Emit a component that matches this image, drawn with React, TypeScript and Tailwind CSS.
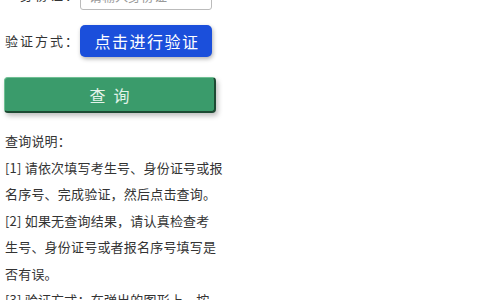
export default function App() {
  return (
    <div className="h-[300px] w-[480px] overflow-hidden bg-white font-['Noto_Sans_CJK_SC',sans-serif] text-[#333]">
      <div className="-mt-[20px] flex flex-col pl-[5px]">
        {/* id card row */}
        <div className="flex h-[30px] items-center">
          <span className="w-[75px] whitespace-nowrap text-right text-[13px] tracking-[2px]">身份证：</span>
          <input
            className="h-[30px] w-[132px] rounded-[3px] border border-[#bbb] px-2 text-[13px] placeholder-[#999] outline-none"
            placeholder="请输入身份证"
          />
        </div>

        {/* verify row */}
        <div className="mt-[15px] flex h-[32px] items-center">
          <span className="w-[75px] whitespace-nowrap text-right text-[13px] tracking-[2px]">验证方式：</span>
          <button
            type="button"
            className="h-[32px] w-[132px] rounded-[5px] bg-[#1b4fdb] pl-[2px] text-[16px] tracking-[1.5px] text-white shadow-[1px_2px_4px_rgba(0,0,0,0.3)]"
          >
            点击进行验证
          </button>
        </div>

        {/* submit */}
        <button
          type="button"
          className="mt-[20px] -ml-[1px] h-[36px] w-[212px] rounded-[4px] border border-b-2 border-r-2 border-l-[#6fbf93] border-t-[#6fbf93] border-b-[#1d4a33] border-r-[#1d4a33] bg-[#3a9b6b] pl-[8px] text-[16px] tracking-[8px] text-[#e2f3ea] shadow-[2px_3px_5px_rgba(0,0,0,0.25)]"
        >
          查询
        </button>

        {/* notes */}
        <div className="mt-[15px] w-[240px] whitespace-nowrap text-[13px] leading-[26.5px] tracking-[0.2px] text-[#333]">
          <p>查询说明：</p>
          <p>
            [1] 请依次填写考生号、身份证号或报
            <br />
            名序号、完成验证，然后点击查询。
          </p>
          <p>
            [2] 如果无查询结果，请认真检查考
            <br />
            生号、身份证号或者报名序号填写是
            <br />
            否有误。
          </p>
          <p>
            [3] 验证方式：在弹出的图形上，按
            <br />
            提示完成验证。
          </p>
        </div>
      </div>
    </div>
  )
}
